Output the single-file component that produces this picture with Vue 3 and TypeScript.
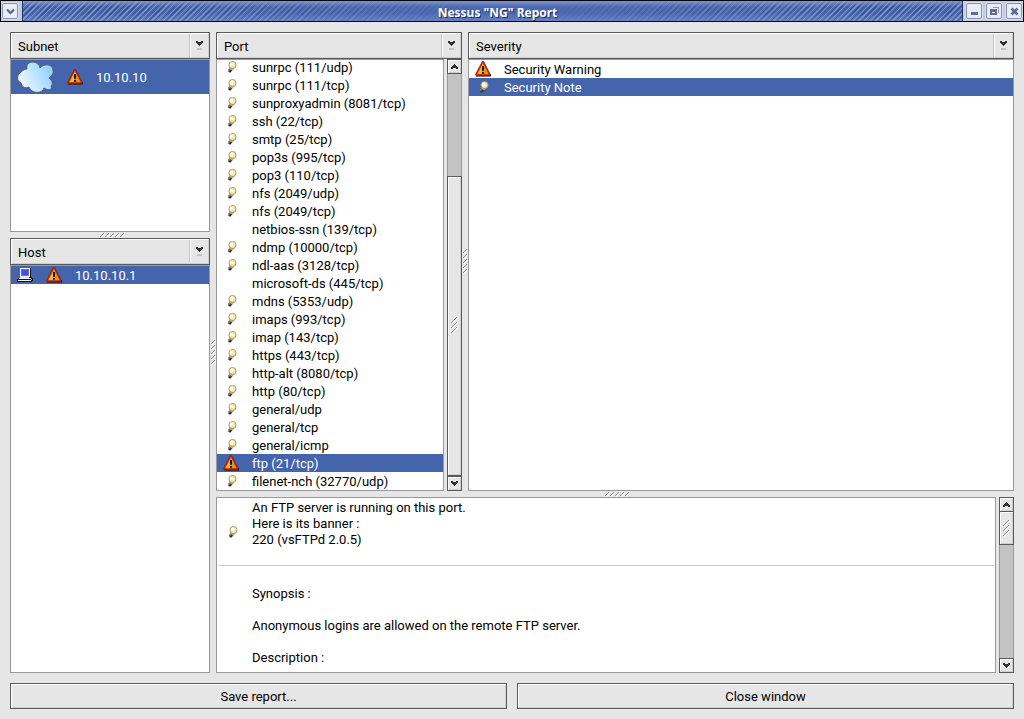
<script setup lang="ts">
import { h, ref, type FunctionalComponent } from 'vue'

type Level = 'warning' | 'note' | ''
interface Item { name: string; level: Level }

const LevelIcon: FunctionalComponent<{ level: Level }> = (props) => {
  if (props.level === 'warning') {
    return h('svg', { class: 'warning', width: 16, height: 16, viewBox: '0 0 16 16', 'aria-hidden': 'true' }, [
      h('path', { d: 'M1.500 13h14.500v2.500H1z', fill: '#2a0d08' }),
      h('path', { d: 'M7.300.5h1.400l6.600 13-.8 1.200H1.200l-.7-1.200z', fill: '#c5200c', stroke: '#8a1a0c', 'stroke-width': 0.7 }),
      h('path', { d: 'M7.900 2 13.700 13.200H2z', fill: '#dc9a14' }),
      h('path', { d: 'M7 5v8H2.800z', fill: '#f0b92c' }),
      h('path', { d: 'M7 5h2v3.500l-.4 1.500H7.400L7 8.500zM7 11h2v1.700H7z', fill: '#1c1204' }),
    ])
  }
  if (props.level === 'note') {
    return h('svg', { class: 'note', width: 10, height: 12, viewBox: '0 0 10 12', 'aria-hidden': 'true' }, [
      h('path', { d: 'M2.600 6 6.800 7 5.400 9.300 2.400 8.600z', fill: '#dcc883', stroke: '#7b6d44', 'stroke-width': 0.6 }),
      h('circle', { cx: 5.5, cy: 4, r: 3.6, fill: '#f6e6a0', stroke: '#968a62', 'stroke-width': 0.8 }),
      h('circle', { cx: 4.7, cy: 3.4, r: 1.9, fill: '#fffef4' }),
      h('path', { d: 'M1.300 8 4.900 9 4.400 10.800 3 11.800 1.300 10.800z', fill: '#333333' }),
      h('path', { d: 'M1.200 8.300h1.400v1.200H1.200z', fill: '#b4b4b4' }),
    ])
  }
  return h('i')
}
LevelIcon.props = { level: String }

const Arrow: FunctionalComponent<{ up?: boolean }> = (props) =>
  h('svg', { width: 7, height: 5, viewBox: '0 0 7 5', 'aria-hidden': 'true', 'shape-rendering': 'crispEdges' }, [
    h('path', {
      d: props.up
        ? 'M3 0h1v1h1v1h1v1h1v2H5V4H2v1H0V3h1V2h1V1h1z'
        : 'M0 0h2v1h3V0h2v2H6v1H5v1H4v1H3V4H2V3H1V2H0z',
      fill: '#303030',
    }),
  ])
Arrow.props = { up: Boolean }

const Grip: FunctionalComponent<{ count: number; vertical?: boolean; size?: number }> = (props) => {
  const s = props.size ?? 4
  const step = 5
  const long = (props.count - 1) * step + s + 1
  const w = props.vertical ? s + 1 : long
  const hgt = props.vertical ? long : s + 1
  const lines = Array.from({ length: props.count }, (_, i) => {
    const x = props.vertical ? 0 : i * step
    const y = props.vertical ? i * step : 0
    return [
      h('path', { d: `M${x + 1} ${y + s + 1}L${x + s + 1} ${y + 1}`, stroke: '#ffffff' }),
      h('path', { d: `M${x} ${y + s}L${x + s} ${y}`, stroke: '#8c8c8c' }),
    ]
  })
  return h('svg', { width: w, height: hgt, viewBox: `0 0 ${w} ${hgt}`, 'aria-hidden': 'true' }, lines.flat())
}
Grip.props = { count: Number, vertical: Boolean, size: Number }

const ports: Item[] = ([
  ['sunrpc (111/udp)', 'note'], ['sunrpc (111/tcp)', 'note'], ['sunproxyadmin (8081/tcp)', 'note'],
  ['ssh (22/tcp)', 'note'], ['smtp (25/tcp)', 'note'], ['pop3s (995/tcp)', 'note'], ['pop3 (110/tcp)', 'note'],
  ['nfs (2049/udp)', 'note'], ['nfs (2049/tcp)', 'note'], ['netbios-ssn (139/tcp)', ''],
  ['ndmp (10000/tcp)', 'note'], ['ndl-aas (3128/tcp)', 'note'], ['microsoft-ds (445/tcp)', ''],
  ['mdns (5353/udp)', 'note'], ['imaps (993/tcp)', 'note'], ['imap (143/tcp)', 'note'],
  ['https (443/tcp)', 'note'], ['http-alt (8080/tcp)', 'note'], ['http (80/tcp)', 'note'],
  ['general/udp', 'note'], ['general/tcp', 'note'], ['general/icmp', 'note'],
  ['ftp (21/tcp)', 'warning'], ['filenet-nch (32770/udp)', 'note'],
] as [string, Level][]).map(([name, level]) => ({ name, level }))

const severities: Item[] = [
  { name: 'Security Warning', level: 'warning' },
  { name: 'Security Note', level: 'note' },
]

const port = ref('ftp (21/tcp)')
const severity = ref('Security Note')
</script>

<template>
  <div class="window">
    <header class="titlebar">
      <div class="wm-group start">
        <button class="wm" aria-label="Window menu">
          <svg width="9" height="7" viewBox="0 0 9 7"><path d="M1 1.500 4.500 5 8 1.500" fill="none" stroke="#5a6890" stroke-width="2.200" /></svg>
        </button>
      </div>
      <h1>Nessus "NG" Report</h1>
      <div class="wm-group">
        <button class="wm" aria-label="Minimize">
          <svg width="9" height="9" viewBox="0 0 9 9"><path d="M1 5h7v3H1z" fill="#5d6b96" /></svg>
        </button>
        <button class="wm" aria-label="Restore">
          <svg width="9" height="9" viewBox="0 0 9 9" shape-rendering="crispEdges"><path d="M3 0h6v6H8V1H3z" fill="#8d98ba" /><path d="M0 2h7v6H0zM2 5v1h3V5z" fill="#5d6b96" fill-rule="evenodd" /></svg>
        </button>
        <button class="wm" aria-label="Close">
          <svg width="9" height="9" viewBox="0 0 9 9"><path d="m1.500 1.500 6 6m0-6-6 6" stroke="#5d6b96" stroke-width="2.600" /></svg>
        </button>
      </div>
    </header>

    <main class="content">
      <div class="panes">
        <div class="left">
          <section class="pane subnet">
            <button class="head"><span>Subnet</span><span class="drop"><Arrow /></span></button>
            <ul class="list" role="listbox" aria-label="Subnet">
              <li class="net selected" role="option" aria-selected="true">
                <svg width="37" height="32" viewBox="0 0 37 32" aria-hidden="true">
                  <defs><linearGradient id="sky" x1="0" y1=".7" x2="1" y2=".3"><stop offset="0" stop-color="#f6fbff" /><stop offset="1" stop-color="#8ccfff" /></linearGradient></defs>
                  <path d="M10 8C8-1 22-1 23 7c4-5 13-4 13 2 1 4-2 6-4 8 4 3 4 7 2 8 2 4-3 5-7 2-1 6-13 6-15-1-4 2-7 0-8-4-5-2-4-9 0-11 2-2 4-3 6-3z" fill="url(#sky)" stroke="#565f5c" stroke-width="1" />
                </svg>
                <LevelIcon level="warning" /><span class="label">10.10.10</span>
              </li>
            </ul>
          </section>
          <div class="grip-h"><Grip :count="5" /></div>
          <section class="pane host">
            <button class="head"><span>Host</span><span class="drop"><Arrow /></span></button>
            <ul class="list" role="listbox" aria-label="Host">
              <li class="machine selected" role="option" aria-selected="true">
                <svg width="16" height="14" viewBox="0 0 16 14" aria-hidden="true" shape-rendering="crispEdges">
                  <path d="M3 0h11v9h1v1h1v3h-1v1H0v-3h1v-1h2z" fill="#101018" />
                  <path d="M3 0h10v9H3z" fill="#f2f2ee" /><path d="M4 1h8v7H4z" fill="#77777c" /><path d="M5 2h6v5H5z" fill="#3b4df0" />
                  <path d="M2 10h12v1H2zM1 12h13v1H1z" fill="#f2f2ee" /><path d="M3 9h9v1H3z" fill="#d8d8d0" /><path d="M14 11h1v1h-1z" fill="#b8b8b0" />
                </svg>
                <LevelIcon level="warning" /><span class="label">10.10.10.1</span>
              </li>
            </ul>
          </section>
        </div>
        <div class="grip-v"><Grip :count="5" vertical /></div>

        <div class="right">
          <div class="upper">
            <section class="pane port">
              <button class="head"><span>Port</span><span class="drop"><Arrow /></span></button>
              <div class="scrolled">
                <ul class="list end" role="listbox" aria-label="Port">
                  <li v-for="p in ports" :key="p.name" class="row" :class="{ selected: p.name === port }" role="option" :aria-selected="p.name === port" @click="port = p.name">
                    <span class="icon"><LevelIcon :level="p.level" /></span><span class="label">{{ p.name }}</span>
                  </li>
                </ul>
                <div class="scrollbar">
                  <button aria-label="Scroll ports up"><Arrow up /></button>
                  <div class="trough before"></div>
                  <div class="thumb tall"><Grip :count="3" vertical :size="6" /></div>
                  <button aria-label="Scroll ports down"><Arrow /></button>
                </div>
              </div>
            </section>
            <div class="grip-v"><Grip :count="5" vertical /></div>
            <section class="pane severity">
              <button class="head"><span>Severity</span><span class="drop"><Arrow /></span></button>
              <ul class="list" role="listbox" aria-label="Severity">
                <li v-for="s in severities" :key="s.name" class="row" :class="{ selected: s.name === severity }" role="option" :aria-selected="s.name === severity" @click="severity = s.name">
                  <span class="icon"><LevelIcon :level="s.level" /></span><span class="label">{{ s.name }}</span>
                </li>
              </ul>
            </section>
          </div>
          <div class="grip-h"><Grip :count="5" /></div>
          <div class="scrolled lower">
            <div class="report">
              <article>
                <span class="icon"><LevelIcon level="note" /></span>
                <p>An FTP server is running on this port.<br />Here is its banner :<br />220 (vsFTPd 2.0.5)<br />&nbsp;</p>
              </article>
              <article class="second">
                <p>Synopsis :</p>
                <p>Anonymous logins are allowed on the remote FTP server.</p>
                <p>Description :</p>
              </article>
            </div>
            <div class="scrollbar">
              <button aria-label="Scroll report up"><Arrow up /></button>
              <div class="thumb short"><Grip :count="3" vertical :size="6" /></div>
              <div class="trough"></div>
              <button aria-label="Scroll report down"><Arrow /></button>
            </div>
          </div>
        </div>
      </div>
      <footer class="actions">
        <button>Save report...</button>
        <button>Close window</button>
      </footer>
    </main>
  </div>
</template>

<style>
body { margin: 0; background: #e6e6e6; }
</style>

<style scoped>
* { box-sizing: border-box; }
.window {
  height: 100vh;
  display: flex;
  flex-direction: column;
  background: #e6e6e6;
  color: #000;
  font: 13px/16px Roboto, "Noto Sans", sans-serif;
}
button { font: inherit; color: inherit; margin: 0; padding: 0; }
ul, p, h1 { margin: 0; padding: 0; list-style: none; }
svg { display: block; flex: none; }

.titlebar {
  height: 22px;
  flex: none;
  display: flex;
  align-items: stretch;
  border: 1px solid #05060c;
  background:
    linear-gradient(90deg, transparent 15%, #4a69b0 47%, #4a69b0 53%, transparent 85%),
    repeating-linear-gradient(135deg, #7b94cc 0 1px, #4f6db2 1px 2px, #34508e 2px 3px, #4a68ac 3px 4px);
}
.titlebar h1 {
  flex: 1;
  text-align: center;
  padding: 1px 0 0 10px;
  color: #fff;
  font: 700 12px/22px "Noto Sans", sans-serif;
  text-shadow: 1px 1px 0 #1b2c5c;
  background: linear-gradient(#8c9ed8cc, transparent 30%, transparent 60%, #8aa2dc66);
}
.wm-group {
  width: 61px;
  display: flex;
  align-items: center;
  gap: 4px;
  padding-left: 3px;
  border-left: 1px solid #26355f;
  background: #c6cce0;
}
.wm-group.start { width: 22px; padding-left: 1px; border-left: 0; border-right: 1px solid #26355f; }
.wm {
  width: 16px;
  height: 16px;
  display: flex;
  align-items: center;
  justify-content: center;
  border: 1px solid #8590b2;
  border-radius: 2px;
  background: #e9edf8;
  box-shadow: 0 0 0 1px #d9deed;
}

.content {
  flex: 1;
  min-height: 0;
  display: flex;
  flex-direction: column;
  gap: 10px;
  padding: 10px;
}
.panes { flex: 1; min-height: 0; display: flex; }
.left { width: 200px; flex: none; display: flex; flex-direction: column; }
.right { flex: 1; min-width: 0; display: flex; flex-direction: column; }
.upper { flex: 1; min-height: 0; display: flex; }
.pane { display: flex; flex-direction: column; min-height: 0; }
.subnet { height: 200px; flex: none; }
.host, .severity { flex: 1; min-width: 0; }
.port { width: 246px; flex: none; }

.grip-h, .grip-v { flex: none; display: flex; align-items: center; justify-content: center; }
.grip-h { height: 6px; padding-left: 4px; }
.grip-v { width: 6px; }

.head {
  height: 27px;
  flex: none;
  display: flex;
  align-items: stretch;
  justify-content: space-between;
  border: 1px solid #5a5a5a;
  background: #e6e6e6;
  box-shadow: inset 1px 1px #fff, inset -1px -1px #cfcfcf;
  padding-left: 7px;
  line-height: 27px;
  text-align: left;
}
.drop {
  width: 20px;
  margin: 1px 0;
  display: flex;
  flex-direction: column;
  align-items: center;
  padding-top: 7px;
  gap: 2px;
  border-left: 1px solid #c4c4c4;
  box-shadow: inset 1px 0 #fff;
}
.drop::after { content: ""; width: 5px; height: 2px; background: #c3c3c3; }

.list {
  flex: 1;
  min-height: 0;
  min-width: 0;
  overflow: hidden;
  border: 1px solid #999;
  background: #fff;
}
.end { display: flex; flex-direction: column; justify-content: flex-end; }
.row, .machine { height: 18px; flex: none; display: flex; align-items: center; line-height: 18px; }
.label { padding-top: 2px; }
.icon { width: 35px; flex: none; display: flex; }
.icon :deep(.warning) { margin-left: 6px; }
.icon :deep(.note) { margin-left: 10px; }
.selected { background: #4464ac; color: #fff; }
.net { height: 34px; display: flex; align-items: center; padding-left: 6px; gap: 13px; }
.machine { padding-left: 6px; gap: 13px; }

.scrolled { flex: 1; min-height: 0; display: flex; gap: 3px; }
.scrolled.lower { flex: none; height: 176px; }
.scrollbar { width: 15px; flex: none; display: flex; flex-direction: column; }
.scrollbar button, .thumb {
  display: flex;
  align-items: center;
  justify-content: center;
  border: 1px solid #5a5a5a;
  background: #e6e6e6;
  box-shadow: inset 1px 1px #fff, inset -1px -1px #cfcfcf;
}
.scrollbar button { height: 15px; flex: none; }
.trough { flex: 1; background: #c3c3c3; border: solid #999; border-width: 0 1px; }
.trough.before { flex: 102; }
.thumb.tall { flex: 300; }
.thumb.short { height: 34px; flex: none; margin-top: -1px; }

.report { flex: 1; min-width: 0; overflow: hidden; border: 1px solid #999; background: #fff; padding: 2px 1px 0; }
.report article { display: flex; align-items: center; }
.report article:first-child { padding-bottom: 1px; border-bottom: 1px solid #ccc; }
.report .icon { width: 34px; }
.report .second { flex-direction: column; align-items: flex-start; gap: 16px; padding: 20px 0 0 34px; }

.actions { flex: none; display: grid; grid-template-columns: 1fr 1fr; gap: 10px; }
.actions button {
  height: 26px;
  padding-top: 2px;
  border: 1px solid #5a5a5a;
  background: #e6e6e6;
  box-shadow: inset 1px 1px #fff, inset -1px -1px #cfcfcf;
}
</style>
